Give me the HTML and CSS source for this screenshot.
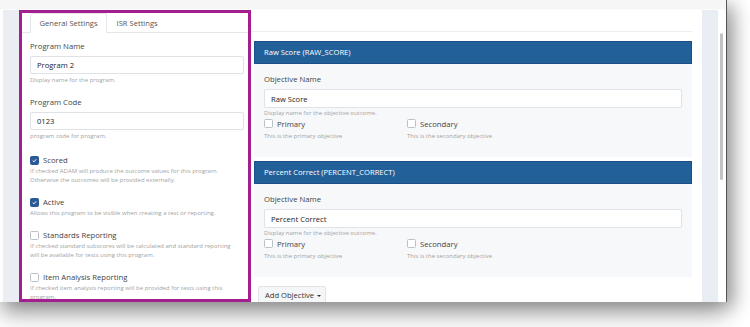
FILE: index.html
```
<!DOCTYPE html>
<html>
<head>
<meta charset="utf-8">
<link rel="stylesheet" href="styles.css">
</head>
<body>
<div class="window">
  <div class="topbar"></div>
  <div class="main">
    <div class="gutter"></div>
    <div class="left">
      <div class="tabs">
        <div class="tab active">General Settings</div>
        <div class="tab">ISR Settings</div>
      </div>
      <div class="form">
        <div class="label">Program Name</div>
        <div class="input">Program 2</div>
        <div class="help">Display name for the program.</div>
        <div class="label mt">Program Code</div>
        <div class="input">0123</div>
        <div class="help">program code for program.</div>
        <div class="check first"><span class="box on"><svg viewBox="0 0 8 8"><path d="M2 4.2 L3.4 5.5 L6 2.6" fill="none" stroke="#fff" stroke-width="1.1"/></svg></span>Scored</div>
        <div class="help">If checked ADAM will produce the outcome values for this program.<br>Otherwise the outcomes will be provided externally.</div>
        <div class="check"><span class="box on"><svg viewBox="0 0 8 8"><path d="M2 4.2 L3.4 5.5 L6 2.6" fill="none" stroke="#fff" stroke-width="1.1"/></svg></span>Active</div>
        <div class="help">Allows this program to be visible when creating a test or reporting.</div>
        <div class="check"><span class="box"></span>Standards Reporting</div>
        <div class="help">If checked standard subscores will be calculated and standard reporting<br>will be available for tests using this program.</div>
        <div class="check"><span class="box"></span>Item Analysis Reporting</div>
        <div class="help">If checked item analysis reporting will be provided for tests using this<br>program.</div>
      </div>
    </div>
    <div class="right">
      <div class="rtop"></div>
      <div class="panel">
        <div class="phead">Raw Score (RAW_SCORE)</div>
        <div class="pbody">
          <div class="label">Objective Name</div>
          <div class="input">Raw Score</div>
          <div class="help">Display name for the objective outcome.</div>
          <div class="opts">
            <div class="opt">
              <div class="check"><span class="box"></span>Primary</div>
              <div class="help">This is the primary objective</div>
            </div>
            <div class="opt">
              <div class="check"><span class="box"></span>Secondary</div>
              <div class="help">This is the secondary objective</div>
            </div>
          </div>
        </div>
      </div>
      <div class="panel">
        <div class="phead">Percent Correct (PERCENT_CORRECT)</div>
        <div class="pbody">
          <div class="label">Objective Name</div>
          <div class="input">Percent Correct</div>
          <div class="help">Display name for the objective outcome.</div>
          <div class="opts">
            <div class="opt">
              <div class="check"><span class="box"></span>Primary</div>
              <div class="help">This is the primary objective</div>
            </div>
            <div class="opt">
              <div class="check"><span class="box"></span>Secondary</div>
              <div class="help">This is the secondary objective</div>
            </div>
          </div>
        </div>
      </div>
      <div class="btn">Add Objective <span class="caret"></span></div>
    </div>
    <div class="scroll"><div class="thumb"></div></div>
  </div>
</div>
</body>
</html>
```

FILE: styles.css
```
html, body {
  margin: 0;
  padding: 0;
  background: #ffffff;
}
body {
  width: 750px;
  height: 327px;
  overflow: hidden;
  font-family: "Open Sans", "DejaVu Sans", sans-serif;
}
.window {
  width: 726px;
  height: 302px;
  border-right: 1px solid #555;
  background: #fff;
  box-shadow: 0 12px 22px rgba(0,0,0,0.32), 8px 4px 16px rgba(0,0,0,0.24);
  overflow: hidden;
  display: flex;
  flex-direction: column;
}
.topbar {
  height: 9px;
  background: #f6f6f6;
  border-bottom: 1px solid #fbfbfb;
  flex: none;
}
.main {
  flex: 1;
  display: flex;
  min-height: 0;
}
.gutter {
  width: 16px;
  border-left: 3px solid #fdfdfd;
  background: #eaeef3;
  flex: none;
}
.left {
  width: 226px;
  border: 3px solid #a31f8f;
  background: #fff;
  flex: none;
  box-sizing: content-box;
  height: 286px;
  overflow: hidden;
}
.tabs {
  display: flex;
  height: 19px;
  border-bottom: 1px solid #e3e6ea;
  padding-left: 8px;
}
.tab {
  font-size: 7.6px;
  color: #555;
  padding: 0 8.5px;
  line-height: 19px;
  border: 1px solid transparent;
  border-bottom: none;
}
.tab.active {
  border-color: #e3e6ea;
  background: #fff;
  margin-bottom: -1px;
  height: 19px;
  border-radius: 2px 2px 0 0;
}
.form {
  padding: 6px 4px 0 8px;
}
.label {
  font-size: 7.7px;
  color: #444;
  line-height: 14px;
  height: 14px;
}
.mt { margin-top: 10px; }
.input {
  margin-top: 3px;
  height: 18px;
  border: 1px solid #dfe2e6;
  border-radius: 2px;
  background: #fff;
  font-size: 7.6px;
  color: #222;
  line-height: 17px;
  padding-left: 6px;
  box-sizing: border-box;
}
.help {
  font-size: 6px;
  color: #a3a3a3;
  line-height: 9px;
  margin-top: 2px;
  white-space: nowrap;
}
.check {
  display: flex;
  align-items: center;
  font-size: 7.7px;
  color: #444;
  height: 12px;
  margin-top: 11px;
}
.check + .help { margin-top: 1px; }
.check.first { margin-top: 13px; }
.box {
  width: 7px;
  height: 7px;
  border: 1px solid #bcc1c7;
  border-radius: 1.5px;
  background: #fff;
  margin-right: 4px;
  box-sizing: content-box;
  display: inline-flex;
  flex: none;
}
.box.on {
  background: #2b5b94;
  border-color: #2b5b94;
}
.box svg { width: 7px; height: 7px; }
.right {
  width: 451px;
  flex: none;
  background: #fff;
  display: flex;
  flex-direction: column;
}
.rtop {
  height: 21px;
  border-bottom: 1px solid #eceef1;
  margin-right: 10px;
  flex: none;
}
.panel {
  margin: 0 10px 0 3px;
  background: #f7f8fa;
  flex: none;
}
.rtop + .panel { margin-top: 9px; }
.panel + .panel { margin-top: 4px; }
.phead {
  height: 21px;
  background: #22609a;
  border: 1px solid #1b4f88;
  color: #fff;
  font-size: 7.6px;
  line-height: 21px;
  padding-left: 9px;
}
.pbody {
  padding: 8px 10px 0 10px;
  height: 85px;
}
.pbody .input { height: 19px; line-height: 18px; }
.pbody .help { margin-top: 1px; }
.opts {
  display: flex;
}
.opt { width: 143px; }
.opts .check { margin-top: 0; height: 11px; }
.opts .check + .help { margin-top: 3px; }
.btn {
  margin: 9px 0 0 7px;
  width: 68px;
  height: 18px;
  box-sizing: border-box;
  border: 1px solid #e1e3e6;
  background: #f5f6f8;
  border-radius: 2px;
  font-size: 7.6px;
  color: #333;
  line-height: 16px;
  padding-left: 6px;
  flex: none;
}
.caret {
  display: inline-block;
  width: 0;
  height: 0;
  border-left: 2px solid transparent;
  border-right: 2px solid transparent;
  border-top: 2px solid #333;
  vertical-align: middle;
  margin-left: 1px;
}
.scroll {
  width: 24px;
  flex: none;
  display: flex;
}
.scroll::before {
  content: "";
  width: 16px;
  background: #e9eef4;
}
.thumb {
  width: 3px;
  margin: 23px 0 0 2px;
  height: 147px;
  background: #c3c3c3;
  border-radius: 2px;
}
```
